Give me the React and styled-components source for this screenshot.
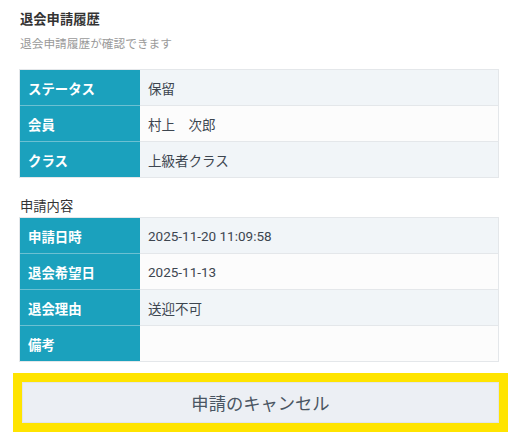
import React from "react";
import styled, { createGlobalStyle } from "styled-components";

const Global = createGlobalStyle`
  html, body { margin: 0; padding: 0; background: #ffffff; }
  body { font-family: Roboto, "Noto Sans CJK JP", sans-serif; }
  * { box-sizing: border-box; }
`;

const Page = styled.div`
  padding: 10px 17px 12px 19px;
  display: flex;
  flex-direction: column;
`;

const Title = styled.h2`
  margin: 0;
  padding-left: 1px;
  font-size: 13.3px;
  line-height: 20px;
  font-weight: 700;
  color: #333333;
`;

const Subtitle = styled.p`
  margin: 4px 0 0;
  padding-left: 1px;
  font-size: 11.7px;
  line-height: 20px;
  color: #9a9a9a;
`;

const Table = styled.div`
  margin-top: ${(p) => p.$gap}px;
  border: 1px solid #e4e7ea;
  border-bottom: none;
  display: flex;
  flex-direction: column;
`;

const Row = styled.div`
  display: grid;
  grid-template-columns: 120px 1fr;
  height: 36px;
`;

const Label = styled.div`
  background: #1ba1bd;
  color: #ffffff;
  font-weight: 700;
  font-size: 13.4px;
  display: flex;
  align-items: center;
  padding-left: 8px;
  border-bottom: 1px solid ${(p) => (p.$last ? "#e4e7ea" : "#6cc0d2")};
`;

const Value = styled.div`
  background: ${(p) => (p.$odd ? "#f1f5f8" : "#fcfcfc")};
  color: #3d4650;
  font-size: 13.5px;
  display: flex;
  align-items: center;
  padding-left: 8px;
  border-bottom: 1px solid #e4e7ea;
`;

const SectionLabel = styled.div`
  margin-top: 19px;
  padding-left: 1px;
  font-size: 13.3px;
  line-height: 20px;
  color: #333333;
`;

const ButtonFrame = styled.div`
  margin: 11px -9px 0 -6px;
  border: 9px solid #ffe400;
  display: flex;
`;

const CancelButton = styled.button`
  flex: 1;
  height: 41px;
  margin: 0;
  background: #eceff4;
  border: 1px solid #e2e5ea;
  font-family: Roboto, "Noto Sans CJK JP", sans-serif;
  font-size: 17.3px;
  color: #4a5562;
  cursor: pointer;
`;

const InfoTable = ({ rows, gap }) => (
  <Table $gap={gap}>
    {rows.map(([k, v], i) => (
      <Row key={k}>
        <Label $last={i === rows.length - 1}>{k}</Label>
        <Value $odd={i % 2 === 0}>{v}</Value>
      </Row>
    ))}
  </Table>
);

export default function App() {
  return (
    <>
      <Global />
      <Page>
        <Title>退会申請履歴</Title>
        <Subtitle>退会申請履歴が確認できます</Subtitle>
        <InfoTable
          gap={15}
          rows={[
            ["ステータス", "保留"],
            ["会員", "村上　次郎"],
            ["クラス", "上級者クラス"],
          ]}
        />
        <SectionLabel>申請内容</SectionLabel>
        <InfoTable
          gap={0}
          rows={[
            ["申請日時", "2025-11-20 11:09:58"],
            ["退会希望日", "2025-11-13"],
            ["退会理由", "送迎不可"],
            ["備考", ""],
          ]}
        />
        <ButtonFrame>
          <CancelButton>申請のキャンセル</CancelButton>
        </ButtonFrame>
      </Page>
    </>
  );
}
